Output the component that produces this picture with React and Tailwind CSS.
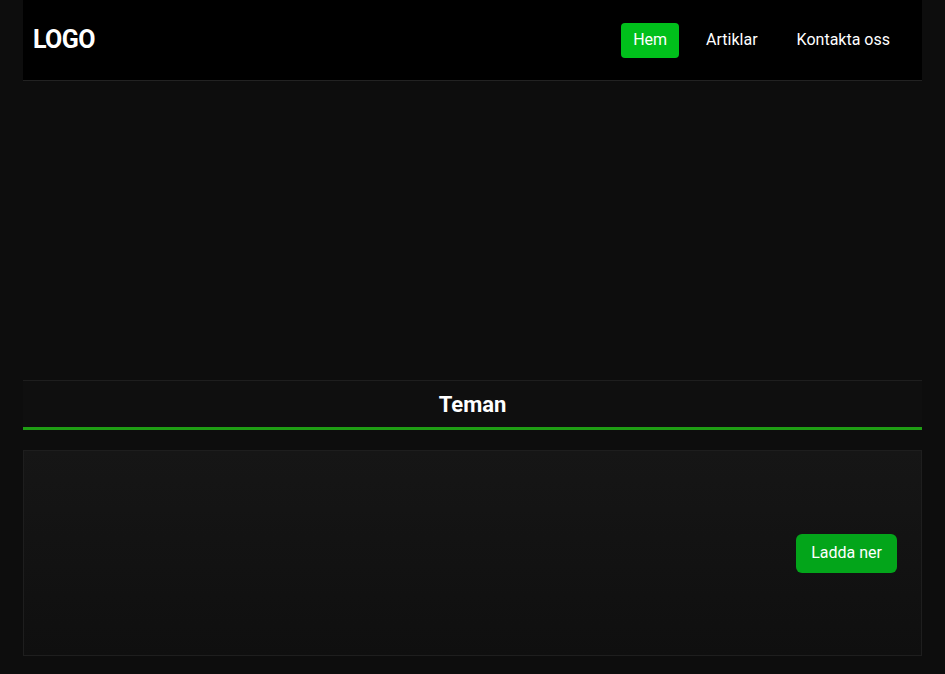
import React from 'react';

const navItems = ['Hem', 'Artiklar', 'Kontakta oss'];

const App = () => {
  return (
    <div className="min-h-screen bg-[#0d0d0d] font-['Roboto',sans-serif] text-white">
      <div className="mx-auto w-[899px]">
        {/* Header */}
        <header className="flex h-[81px] items-center justify-between border-b border-[#222] bg-black pl-[10px] pr-[20px]">
          <div className="text-[25px] font-bold tracking-tight">LOGO</div>
          <nav className="flex items-center gap-[15px]">
            {navItems.map((item, i) => (
              <a
                key={item}
                href="#"
                className={`flex h-[35px] items-center rounded px-3 text-base ${i === 0 ? 'bg-[#00c01b]' : ''}`}
              >
                {item}
              </a>
            ))}
          </nav>
        </header>

        {/* Hero (empty) */}
        <div className="h-[299px]" />

        {/* Section title */}
        <div className="flex h-[50px] items-center justify-center border-t border-b-[3px] border-t-[#1e1e1e] border-b-[#1f9e14] bg-[#0f0f0f]">
          <h2 className="text-[22px] font-bold">Teman</h2>
        </div>

        {/* Card */}
        <div className="mt-5 flex h-[206px] items-center justify-end border border-[#1e1e1e] bg-gradient-to-b from-[#161616] to-[#0f0f0f] pr-6">
          <button className="h-[39px] rounded-md bg-[#03a51a] px-[15px] text-base">Ladda ner</button>
        </div>
      </div>
    </div>
  );
};

export default App;
